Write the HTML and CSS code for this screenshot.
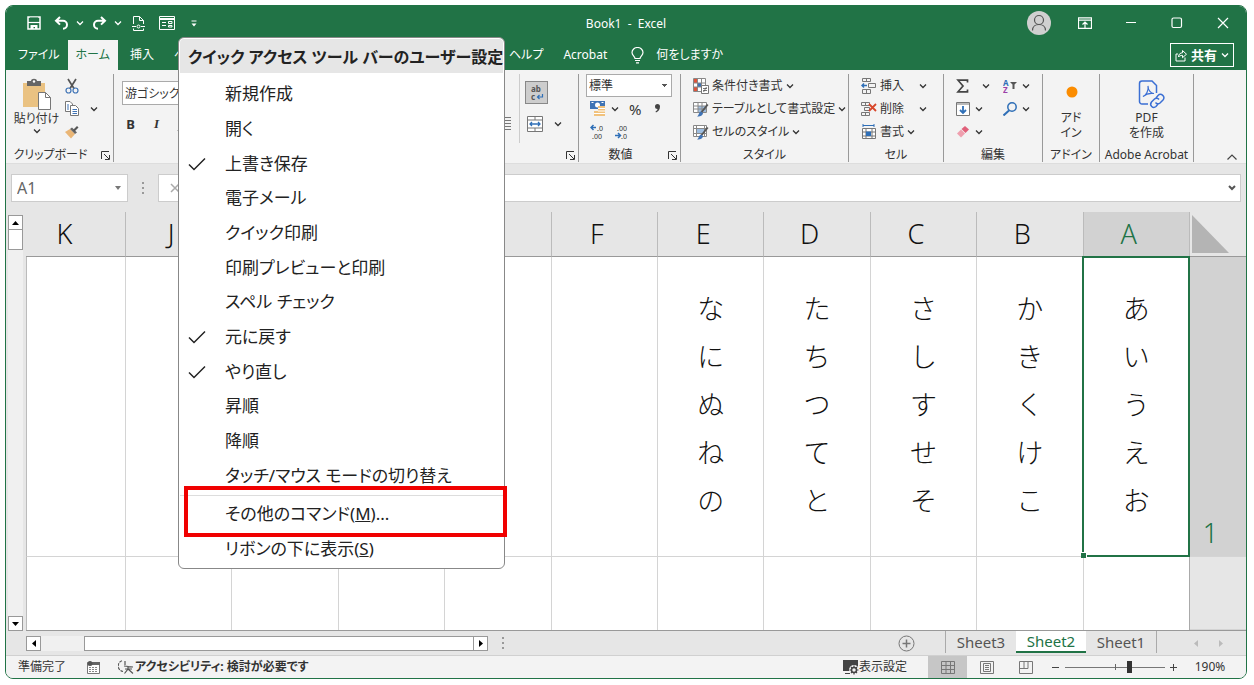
FILE: index.html
```html
<!DOCTYPE html>
<html lang="ja">
<head>
    <meta charset="utf-8">
    <title>Book1 - Excel</title>
    <meta name="viewport" content="width=device-width, initial-scale=1.0">
    <link rel="stylesheet" href="styles.css">
</head>

<body>
    <!-- shared icons -->
    <svg class="defs" width="0" height="0" aria-hidden="true">
        <symbol id="chev" viewBox="0 0 8 8"><path d="M1 2.500 4 5.500l3-3" fill="none" stroke="currentColor" stroke-width="1.300"/></symbol>
        <symbol id="launch" viewBox="0 0 9 9"><path d="M.5 8V.5H8M3 3l5 5M8.500 4v4.500H4" fill="none" stroke="currentColor"/></symbol>
        <symbol id="tick" viewBox="0 0 18 14"><path d="M1 7.500 6 12.500 17 1.500" fill="none" stroke="currentColor" stroke-width="1.500"/></symbol>
    </svg>

    <div class="window">
        <header class="titlebar">
            <div class="qat">
                <button class="qat-btn save" aria-label="上書き保存"><svg width="14" height="14" viewBox="0 0 14 14"><path d="M1 1h12v12H1z" fill="none" stroke="#fff" stroke-width="1.500"/><path d="M3 1.500h8v4.500H3z" fill="#217346"/><path d="M1 6.500h12" stroke="#fff" stroke-width="1.200"/><path d="M3.500 13V9h7v4H8v-2H6.500v2z" fill="#fff"/></svg></button>
                <button class="qat-btn" aria-label="元に戻す"><svg width="15" height="14" viewBox="0 0 15 14"><path d="M6 1 2 4.800 6 8.600M2 4.800h7a4 4 0 0 1 0 8" fill="none" stroke="#fff" stroke-width="2"/></svg></button>
                <button class="drop" aria-label="元に戻す一覧"><svg width="8" height="8"><use href="#chev"/></svg></button>
                <button class="qat-btn" aria-label="やり直し"><svg width="15" height="14" viewBox="0 0 15 14"><path d="m9 1 4 3.800L9 8.600M13 4.800H6a4 4 0 0 0 0 8" fill="none" stroke="#fff" stroke-width="2"/></svg></button>
                <button class="drop" aria-label="やり直し一覧"><svg width="8" height="8"><use href="#chev"/></svg></button>
                <button class="qat-btn wide" aria-label="ページ設定"><svg width="13" height="15" viewBox="0 0 13 15" fill="none" stroke="#fff"><path d="M1.500 8V.5h6l4 4V8M7.500.5v4h4M1.500 12.500v2h10v-2"/><path d="M0 10.500h4m5 0h4"/><circle cx="6.500" cy="10.500" r="1.500"/></svg></button>
                <button class="qat-btn" aria-label="フォーム"><svg width="16" height="14" viewBox="0 0 16 14" fill="none" stroke="#fff"><path d="M.5.5h15v13H.5z"/><path d="M.5 3h15" stroke-width="2"/><path d="M3 6.500h4M3 9.500h4M9.500 5.500H13v2H9.500zM9.500 9.500H13v1.500H9.500z"/></svg></button>
                <button class="qat-btn save" aria-label="クイック アクセス ツール バーのユーザー設定"><svg width="6" height="7" viewBox="0 0 6 7"><path d="M.5 1h5" stroke="#fff"/><path d="M.5 3.500h5L3 6.500z" fill="#fff"/></svg></button>
            </div>
            <div class="doc-title">Book1&nbsp; -&nbsp; Excel</div>
            <div class="win-btns">
                <button aria-label="アカウント"><svg width="24" height="24" viewBox="0 0 24 24"><circle cx="12" cy="12" r="12" fill="#d0d0d0"/><g fill="none" stroke="#555" stroke-width="1.200"><circle cx="12" cy="9" r="4.500"/><path d="M5.500 19.500c0-8 13-8 13 0"/></g></svg></button>
                <button aria-label="リボンの表示オプション"><svg width="14" height="12" viewBox="0 0 14 12" fill="none" stroke="#fff"><path d="M.5.800h13v10.500H.5zM.5 3.200h13M7 11V5M4.500 7.500 7 5l2.500 2.500" stroke-width="1.200"/></svg></button>
                <button aria-label="最小化"><svg width="12" height="12"><path d="M1 5.500h10" stroke="#fff"/></svg></button>
                <button aria-label="最大化"><svg width="12" height="12"><rect x="1" y="1" width="9.500" height="9.500" rx="1.500" fill="none" stroke="#fff" stroke-width="1.200"/></svg></button>
                <button aria-label="閉じる"><svg width="12" height="12"><path d="m1 1 10 10M11 1 1 11" stroke="#fff" stroke-width="1.200"/></svg></button>
            </div>
        </header>

        <nav class="tabs">
            <div class="tabs-main">
                <button class="tab">ファイル</button>
                <button class="tab active">ホーム</button>
                <button class="tab">挿入</button>
                <button class="tab">ページ レイアウト</button>
            </div>
            <button class="tab help">ヘルプ</button>
            <button class="tab">Acrobat</button>
            <button class="tab tell"><svg width="13" height="17" viewBox="0 0 13 17" fill="none" stroke="#fff" stroke-width="1.200"><path d="M4 11.500C4 9.500 1 8.500 1 5.500a5.500 5 0 0 1 11 0c0 3-3 4-3 6z"/><path d="M4 13.500h5M5 15.800h3"/></svg>何をしますか</button>
            <button class="share"><svg width="12" height="13" viewBox="0 0 12 13" fill="none" stroke="#fff"><path d="M3 5H1v7h9V8.500"/><path d="M3.500 8c0-3 2-4.200 4-4.200V1.500l4 3.700-4 3.500V6.400c-2 0-3 .4-4 1.600z"/></svg>共有<svg width="8" height="8"><use href="#chev"/></svg></button>
        </nav>

        <section class="ribbon">
            <div class="group clipboard">
                <div class="group-body">
                    <button class="big">
                        <svg width="28" height="32" viewBox="0 0 28 32"><path d="M0 5h22v24H0z" fill="#eac282"/><path d="M4 3h4c0-3 6-3 6 0h4v5H4z" fill="#666"/><circle cx="11" cy="3.500" r="1.200" fill="#fff"/><path d="M15.500 14.500h7l5 5v12h-12z" fill="#fff" stroke="#777"/><path d="M22.500 14.500v5h5" fill="none" stroke="#777"/></svg>
                        <span>貼り付け</span>
                        <svg width="8" height="8"><use href="#chev"/></svg>
                    </button>
                    <div class="rows">
                        <div class="row"><button aria-label="切り取り"><svg width="14" height="16" viewBox="0 0 14 16" fill="none"><path d="M3 1l6 9.500M11 1 5 10.500" stroke="#555" stroke-width="1.700"/><circle cx="3.500" cy="12.500" r="2.500" stroke="#3f73b5" stroke-width="1.200"/><circle cx="10.500" cy="12.500" r="2.500" stroke="#3f73b5" stroke-width="1.200"/></svg></button></div>
                        <div class="row"><button aria-label="コピー"><svg width="14" height="15" viewBox="0 0 14 15"><path d="M.5.5H5L7.500 3v7.500h-7z" fill="#fff" stroke="#777"/><path d="M5.500 4.500h5l3 3v7h-8z" fill="#fff" stroke="#777"/><path d="M2 4h2M2 6h2M2 8h2M7.500 8.500H12m-4.500 2H12m-4.500 2H12" stroke="#3f73b5"/></svg></button><button class="drop far" aria-label="コピー一覧"><svg width="8" height="8"><use href="#chev"/></svg></button></div>
                        <div class="row"><button aria-label="書式のコピー"><svg width="14" height="14" viewBox="0 0 14 14"><path d="M0 7l5-3 5 5-4 4.500z" fill="#eab676"/><path d="m5 4 2-1.500 5 5L10 9z" fill="#666"/><path d="m8 5 4-4 1.500 1.500-4 4z" fill="#555"/></svg></button></div>
                    </div>
                </div>
                <div class="group-label">クリップボード<button class="launcher" aria-label="クリップボード オプション"><svg width="9" height="9"><use href="#launch"/></svg></button></div>
            </div>

            <div class="group font">
                <div class="group-body">
                    <input class="font-name" type="text" value="游ゴシック" aria-label="フォント">
                    <div class="font-style">
                        <button><b>B</b></button>
                        <button><i>I</i></button>
                        <button><u>U</u></button>
                    </div>
                </div>
            </div>

            <div class="group align">
                <div class="group-body">
                    <svg class="justify" width="14" height="14" viewBox="0 0 14 14" stroke="#777"><path d="M0 .5h14M0 3.500h14M0 6.500h14M0 9.500h14M0 12.500h14"/></svg>
                    <div class="wrap-col">
                        <button class="wrap-btn" aria-label="折り返して全体を表示する"><svg width="20" height="20" viewBox="0 0 20 20"><text x="4" y="9" class="ico-text">ab</text><text x="4" y="17" class="ico-text">c</text><path d="M15.500 11v3h-5m2-2-2 2 2 2" fill="none" stroke="#2f6fb7" stroke-width="1.200"/></svg></button>
                        <div class="merge">
                            <button aria-label="セルを結合して中央揃え"><svg width="16" height="16" viewBox="0 0 16 16" fill="none" stroke="#777"><path d="M.5.5h15v15H.5z" fill="#fff"/><path d="M.5 4h15m-15 8h15M8 .5V4m0 8v3.500"/><path d="M3 8h10M5 6 3 8l2 2m6-4 2 2-2 2" stroke="#2f6fb7" stroke-width="1.300"/></svg></button>
                            <button class="drop far" aria-label="結合一覧"><svg width="8" height="8"><use href="#chev"/></svg></button>
                        </div>
                    </div>
                </div>
                <div class="group-label"><button class="launcher" aria-label="配置オプション"><svg width="9" height="9"><use href="#launch"/></svg></button></div>
            </div>

            <div class="group number">
                <div class="group-body rows">
                    <select class="num-format" aria-label="表示形式"><option>標準</option></select>
                    <div class="row">
                        <button aria-label="通貨表示形式"><svg width="16" height="15" viewBox="0 0 16 15"><path d="M0 0h15v8H0z" fill="#3f73b5"/><circle cx="7.500" cy="4" r="2.500" fill="#fff"/><path d="M1.500 1.500h2m8 0h2" stroke="#fff"/><path d="M8 5h7v10H8zM4 10h5v5H4z" fill="#f1c27d"/><path d="M8 7.500h7M8 10h7M4 12.500h11" stroke="#fff"/></svg></button>
                        <button class="drop near" aria-label="通貨一覧"><svg width="8" height="8"><use href="#chev"/></svg></button>
                        <button class="percent">%</button>
                        <button class="comma" aria-label="桁区切りスタイル"><svg width="6" height="9" viewBox="0 0 6 9"><path d="M0 2.500a2.500 2.500 0 1 1 5 0C5 5.500 3.500 7.500 1 8.500L.500 7.500C2 6.500 2.500 5.800 2.500 5A2.500 2.500 0 0 1 0 2.500z" fill="#444"/></svg></button>
                    </div>
                    <div class="row">
                        <button aria-label="小数点以下の表示桁数を増やす"><svg width="16" height="16" viewBox="0 0 16 16"><path d="M6 3.500H1m2.500-2.500L1 3.500 3.500 6" fill="none" stroke="#2f6fb7" stroke-width="1.500"/><text x="7" y="7" class="ico-num">.0</text><text x="2" y="15" class="ico-num">.00</text></svg></button>
                        <button class="dec" aria-label="小数点以下の表示桁数を減らす"><svg width="16" height="16" viewBox="0 0 16 16"><path d="M0 11.500h5M3 9l2.500 2.500L3 14" fill="none" stroke="#2f6fb7" stroke-width="1.500"/><text x="2" y="7" class="ico-num">.00</text><text x="6" y="15" class="ico-num">.0</text></svg></button>
                    </div>
                </div>
                <div class="group-label">数値<button class="launcher" aria-label="数値オプション"><svg width="9" height="9"><use href="#launch"/></svg></button></div>
            </div>

            <div class="group styles">
                <div class="group-body rows">
                    <button class="row item"><svg width="16" height="16" viewBox="0 0 16 16"><path d="M.5.5h12v13H.5z" fill="#fff" stroke="#888"/><path d="M1 1h4v4H1z" fill="#e0533a"/><path d="M5 5h4v4H5z" fill="#3f73b5"/><path d="M1 9h4v4H1z" fill="#e0533a"/><path d="M4.500.5v13M8.500.5v13M.5 5h12M.5 9h12" stroke="#888" fill="none"/><path d="M8.500 7.500h7v8h-7z" fill="#fff" stroke="#777"/><path d="M10 10.500h4M10 12.500h4M13.500 9l-3 5" stroke="#555" stroke-width=".8"/></svg>条件付き書式<svg width="8" height="8"><use href="#chev"/></svg></button>
                    <button class="row item"><svg width="16" height="16" viewBox="0 0 16 16"><path d="M.5 1.500h13v10H.5z" fill="#fff" stroke="#888"/><path d="M5 5h8v6H5z" fill="#9dbde0"/><path d="M5 1.500v10M9 1.500v10M.5 5h13M.5 8h13" stroke="#888" fill="none"/><path d="M15.500 4 9 12l-1.500-1L14 3z" fill="#555"/><path d="M8 10.500 10 12c0 3-4 3.500-6 3.500 2-1 1.500-4 4-5z" fill="#3f73b5"/></svg>テーブルとして書式設定<svg width="8" height="8"><use href="#chev"/></svg></button>
                    <button class="row item"><svg width="16" height="16" viewBox="0 0 16 16"><path d="M.5 1.500h13v11H.5z" fill="#fff" stroke="#888"/><path d="M3.500 4.500h8v5h-8z" fill="#9dbde0"/><path d="M3.500 1.500v11m8-11v11M.5 4.500h13M.5 9.500h13" stroke="#888" fill="none"/><path d="M15.500 4 9 12l-1.500-1L14 3z" fill="#555"/><path d="M8 10.500 10 12c0 3-4 3.500-6 3.500 2-1 1.500-4 4-5z" fill="#3f73b5"/></svg>セルのスタイル<svg width="8" height="8"><use href="#chev"/></svg></button>
                </div>
                <div class="group-label">スタイル</div>
            </div>

            <div class="group cells">
                <div class="group-body rows">
                    <div class="row"><button class="item"><svg width="16" height="16" viewBox="0 0 16 16" fill="none" stroke="#777"><path d="M1.500.5h8v3h-8zM5.500.5v3M7.500 5.500h7v4h-7zM1.500 11.500h8v4h-8zM5.500 11.500v4"/><path d="M6 7.500H1M3 5.500 1 7.500l2 2" stroke="#2f6fb7" stroke-width="1.500"/></svg>挿入</button><button class="drop push" aria-label="挿入一覧"><svg width="8" height="8"><use href="#chev"/></svg></button></div>
                    <div class="row"><button class="item"><svg width="16" height="16" viewBox="0 0 16 16" fill="none" stroke="#777"><path d="M.5 1.500h8v3h-8zM4.500 1.500v3M3.500 6.500h5v3h-5zM.5 11.500h8v3h-8zM4.500 11.500v3"/><path d="m8 3 7 7m0-7-7 7" stroke="#d8472b" stroke-width="1.800"/></svg>削除</button><button class="drop push" aria-label="削除一覧"><svg width="8" height="8"><use href="#chev"/></svg></button></div>
                    <div class="row"><button class="item"><svg width="16" height="16" viewBox="0 0 16 16" fill="none" stroke="#777"><path d="M1.500 4.500h13v10h-13z" fill="#fff"/><path d="M5 4.500v10m6-10v10M1.500 8h13m-13 4h13"/><path d="M5 7.500h5V12H5z" fill="#2f6fb7" stroke="none"/><path d="M2 1.500h11M2 0v3m11-3v3" stroke="#2f6fb7"/></svg>書式<svg width="8" height="8"><use href="#chev"/></svg></button></div>
                </div>
                <div class="group-label">セル</div>
            </div>

            <div class="group edit">
                <div class="group-body edit-cols">
                    <div class="rows">
                        <div class="row"><button aria-label="オート SUM"><svg width="14" height="14" viewBox="0 0 14 14"><path d="M11.500 3.500V1.200H2L7 7l-5 5.800h9.500v-2.300" fill="none" stroke="#444" stroke-width="1.700"/></svg></button><button class="drop mid" aria-label="合計一覧"><svg width="8" height="8"><use href="#chev"/></svg></button></div>
                        <div class="row"><button aria-label="フィル"><svg width="14" height="14" viewBox="0 0 14 14"><path d="M.5.5h13v13H.5z" fill="#fff" stroke="#777"/><path d="M.5 2h13" stroke="#777"/><path d="M7 4v7M4 8l3 3 3-3" fill="none" stroke="#2f6fb7" stroke-width="1.800"/></svg></button><button class="drop near" aria-label="フィル一覧"><svg width="8" height="8"><use href="#chev"/></svg></button></div>
                        <div class="row"><button aria-label="クリア"><svg width="14" height="14" viewBox="0 0 14 14"><path d="m9 1 4 3.500L9.500 8l-4-4z" fill="#e0607a"/><path d="M5 4.500 9 8.500l-4 4-4-4z" fill="#ef9fae"/></svg></button><button class="drop near" aria-label="クリア一覧"><svg width="8" height="8"><use href="#chev"/></svg></button></div>
                    </div>
                    <div class="rows">
                        <div class="row"><button aria-label="並べ替えとフィルター"><svg width="14" height="16" viewBox="0 0 14 16"><text x="0" y="8" class="ico-a">A</text><text x="0" y="15" class="ico-z">Z</text><path d="M7 4h7l-2.500 2.500V11h-2V6.500z" fill="#555"/></svg></button><button class="drop near" aria-label="並べ替え一覧"><svg width="8" height="8"><use href="#chev"/></svg></button></div>
                        <div class="row"><button aria-label="検索と選択"><svg width="14" height="14" viewBox="0 0 14 14" fill="none" stroke="#2f6fb7"><circle cx="9" cy="5" r="4.200" stroke-width="1.500"/><path d="M6 8.500.5 13.500" stroke-width="2"/></svg></button><button class="drop near" aria-label="検索一覧"><svg width="8" height="8"><use href="#chev"/></svg></button></div>
                    </div>
                </div>
                <div class="group-label">編集</div>
            </div>

            <div class="group addin">
                <div class="group-body"><button class="big"><svg width="32" height="32" viewBox="0 0 32 32"><circle cx="17" cy="14" r="5.500" fill="#fb8c00"/></svg><span>アド<br>イン</span></button></div>
                <div class="group-label">アドイン</div>
            </div>

            <div class="group acrobat">
                <div class="group-body"><button class="big"><svg width="36" height="32" viewBox="0 0 36 32" fill="none" stroke="#3b6fd4" stroke-width="1.500"><path d="M19 26h-6a2.500 2.500 0 0 1-2.500-2.500v-18A2.500 2.500 0 0 1 13 3h10l4.500 4.500V15"/><path d="M14 18.500c3-1 6-6 5-10.500 0 4.500 3 7.500 6 7.500-3-.5-8 .5-11 3z" stroke-width="1.200"/><path d="m27 20 2-2.500c3-3 8 1 5 4.500l-3 3c-1.500 1.300-3.500.8-4.500-.5"/><path d="m29 26-2 2.500c-3 2.500-7-1-4.500-4.500l3-3c1.500-1.300 3.500-.8 4.500.5"/></svg><span>PDF<br>を作成</span></button></div>
                <div class="group-label">Adobe Acrobat</div>
            </div>
            <button class="collapse" aria-label="リボンを折りたたむ"><svg width="10" height="6"><path d="m.5 5.500 4.500-4.500 4.500 4.500" fill="none" stroke="#444" stroke-width="1.200"/></svg></button>
        </section>

        <section class="formula-bar">
            <div class="name-box"><input type="text" value="A1" aria-label="名前ボックス"><button aria-label="名前一覧"><svg width="6" height="4"><path d="M0 0h6L3 4z" fill="#777"/></svg></button></div>
            <div class="dots"></div>
            <div class="fx"><button aria-label="キャンセル"><svg width="10" height="10"><path d="m1 1 8 8M9 1 1 9" stroke="#aaa" stroke-width="1.500"/></svg></button></div>
            <div class="formula"><input type="text" aria-label="数式"><button aria-label="数式バーの展開"><svg width="8" height="6"><path d="m1 1 3 3 3-3" fill="none" stroke="#555" stroke-width="2"/></svg></button></div>
        </section>

        <main class="sheet">
            <div class="vscroll">
                <button class="sb" aria-label="上へ"><svg width="7" height="4"><path d="M0 4h7L3.500 0z"/></svg></button>
                <div class="vthumb"></div>
                <button class="sb bottom" aria-label="下へ"><svg width="7" height="4"><path d="M0 0h7L3.500 4z"/></svg></button>
            </div>
            <div class="grid-wrap">
                <table class="grid">
                    <colgroup><col class="col-k"><col span="10"><col class="col-head"></colgroup>
                    <thead>
                        <tr><th>K</th><th>J</th><th></th><th></th><th></th><th>F</th><th>E</th><th>D</th><th>C</th><th>B</th><th class="sel">A</th><th class="corner"><svg width="37" height="38"><path d="M0 0v38h37z" fill="#b4b4b4"/></svg></th></tr>
                    </thead>
                    <tbody>
                        <tr class="first">
                            <td></td><td></td><td></td><td></td><td></td><td></td>
                            <td>な<br>に<br>ぬ<br>ね<br>の</td>
                            <td>た<br>ち<br>つ<br>て<br>と</td>
                            <td>さ<br>し<br>す<br>せ<br>そ</td>
                            <td>か<br>き<br>く<br>け<br>こ</td>
                            <td class="cursor">あ<br>い<br>う<br>え<br>お</td>
                            <th class="sel">1</th>
                        </tr>
                        <tr><td></td><td></td><td></td><td></td><td></td><td></td><td></td><td></td><td></td><td></td><td></td><th></th></tr>
                    </tbody>
                </table>
            </div>
        </main>

        <div class="sheet-bar">
            <div class="hscroll">
                <button class="sb" aria-label="左へ"><svg width="4" height="7"><path d="M4 0v7L0 3.500z"/></svg></button>
                <div class="hthumb"></div>
                <button class="sb" aria-label="右へ"><svg width="4" height="7"><path d="M0 0v7l4-3.500z"/></svg></button>
            </div>
            <div class="dots"></div>
            <button class="add" aria-label="新しいシート"><svg width="17" height="17" viewBox="0 0 17 17" fill="none" stroke="#777"><circle cx="8.500" cy="8.500" r="7.500"/><path d="M4.500 8.500h8m-4-4v8" stroke-width="1.500"/></svg></button>
            <div class="sheet-tabs">
                <button>Sheet3</button>
                <button class="current">Sheet2</button>
                <button>Sheet1</button>
            </div>
            <div class="sheet-nav"><svg width="4" height="7"><path d="M4 0v7L0 3.500z" fill="#bbb"/></svg><svg width="4" height="7"><path d="M0 0v7l4-3.500z" fill="#bbb"/></svg></div>
        </div>

        <footer class="status">
            <span>準備完了</span>
            <svg class="macro" width="13" height="13" viewBox="0 0 13 13"><path d="M.5 1.500h12v11H.5z" fill="#fff" stroke="#777"/><path d="M5 1h8v3H5z" fill="#666"/><circle cx="3" cy="2.500" r="2.500" fill="#555"/><path d="M2 6.500h9M2 8.500h9M2 10.500h9" stroke="#888" stroke-dasharray="2 1"/></svg>
            <button class="a11y"><svg width="16" height="14" viewBox="0 0 16 14" fill="none" stroke="#555" stroke-width="1.200"><path d="M4 .8A5.500 5.500 0 0 0 5 11.500" stroke-dasharray="3 1"/><path d="M7 1v4m-1 1 9 1M10 6v3l-3.500 4.500M10 9l5 4.500M7 9h7"/></svg>アクセシビリティ: 検討が必要です</button>
            <button class="display"><svg width="16" height="15" viewBox="0 0 16 15"><path d="M0 0h15v8H8v3H0z" fill="#444"/><path d="M2 13.500h5" stroke="#444"/><circle cx="11" cy="10" r="5" fill="#f3f3f3"/><circle cx="11" cy="10" r="2.500" fill="none" stroke="#444" stroke-width="1.500"/><path d="M11 5.500v2m0 5v2M6.500 10h2m5 0h2M8 7l1 1m4 4 1 1m0-6-1 1m-4 4-1 1" stroke="#444" stroke-width="1.200"/></svg>表示設定</button>
            <div class="views">
                <button class="on" aria-label="標準"><svg width="14" height="13"><path d="M.5.5h13v12H.5zM5 .5v12M9.500.5v12M.5 4.500h13M.5 8.500h13" fill="none" stroke="#777"/></svg></button>
                <button aria-label="ページ レイアウト"><svg width="14" height="13"><path d="M.5.5h13v12H.5zM3.500 2.500h7v8h-7zM5 4.500h4M5 6.500h4M5 8.500h4" fill="none" stroke="#777"/></svg></button>
                <button aria-label="改ページ プレビュー"><svg width="14" height="13"><path d="M.5.5h13v12H.5zM1 7.500h8V.5M5 .5v7" fill="none" stroke="#777"/></svg></button>
            </div>
            <button class="zoom-btn" aria-label="縮小"><svg width="9" height="9"><path d="M1 4.500h7" stroke="#444"/></svg></button>
            <input class="zoom" type="range" min="0" max="100" value="65" aria-label="ズーム">
            <button class="zoom-btn" aria-label="拡大"><svg width="9" height="9"><path d="M1 4.500h7m-3.500-3.500v7" stroke="#444"/></svg></button>
            <button class="percent-label">190%</button>
        </footer>

        <div class="menu">
            <div class="menu-title">クイック アクセス ツール バーのユーザー設定</div>
            <div class="menu-list">
                <button>新規作成</button>
                <button>開く</button>
                <button><svg width="18" height="14"><use href="#tick"/></svg>上書き保存</button>
                <button>電子メール</button>
                <button>クイック印刷</button>
                <button>印刷プレビューと印刷</button>
                <button>スペル チェック</button>
                <button><svg width="18" height="14"><use href="#tick"/></svg>元に戻す</button>
                <button><svg width="18" height="14"><use href="#tick"/></svg>やり直し</button>
                <button>昇順</button>
                <button>降順</button>
                <button>タッチ/マウス モードの切り替え</button>
            </div>
            <div class="menu-more">
                <button class="marked">その他のコマンド(<u>M</u>)...</button>
                <button>リボンの下に表示(<u>S</u>)</button>
            </div>
        </div>
    </div>
</body>
</html>
```
FILE: styles.css
```css
* {
    box-sizing: border-box;
}

body {
    margin: 0;
    padding: 5px 7px 6px 5px;
    height: 100vh;
    background-color: white;
    font-family: "Noto Sans", "Noto Sans CJK JP", sans-serif;
    font-feature-settings: "palt";
    font-size: 12px;
    line-height: 16px;
    color: #333;
}

button, input, select {
    font: inherit;
    font-feature-settings: inherit;
    color: inherit;
    border: none;
    background: none;
    padding: 0;
    margin: 0;
    border-radius: 0;
    outline: none;
}

button {
    display: flex;
    align-items: center;
    justify-content: center;
    white-space: nowrap;
}

svg {
    display: block;
    flex-shrink: 0;
}

.defs {
    position: absolute;
}

.window {
    position: relative;
    display: flex;
    flex-direction: column;
    height: 100%;
    border: 1px solid #217346;
    border-radius: 8px;
    background-color: #e6e6e6;
}

/* title bar */
.titlebar {
    display: grid;
    grid-template-columns: 1fr auto 1fr;
    align-items: center;
    height: 34px;
    background-color: #217346;
    border-radius: 7px 7px 0 0;
    color: white;
}

.doc-title {
    padding-top: 2px;
}

.qat {
    display: flex;
    align-items: center;
    padding-left: 15px;
}

.qat-btn {
    width: 28px;
}

.qat-btn.save {
    width: 26px;
}

.qat-btn.wide {
    width: 30px;
}

.drop {
    width: 10px;
}

.win-btns {
    display: flex;
    justify-content: flex-end;
}

.win-btns button {
    width: 46px;
}

/* ribbon tabs */
.tabs {
    display: flex;
    height: 30px;
    background-color: #217346;
    color: white;
}

.tabs-main {
    display: flex;
    width: 491px;
}

.tab {
    padding: 0 8px 0 12px;
}

.tab.active {
    padding: 0 8px;
    background-color: #f3f3f3;
    color: #217346;
}

.tell {
    gap: 12px;
    padding-left: 16px;
}

.share {
    align-self: center;
    gap: 4px;
    height: 24px;
    margin-left: auto;
    margin-right: 12px;
    padding: 0 4px;
    border: 1px solid white;
    font-size: 13px;
    font-weight: bold;
}

/* ribbon */
.ribbon {
    display: flex;
    padding: 4px 0 1px;
    background-color: #f3f3f3;
    border-bottom: 1px solid #ddd;
}

.group {
    border-right: 1px solid #999;
}

.group-body {
    display: flex;
    height: 69px;
}

.group-label {
    position: relative;
    height: 19px;
    padding-top: 4px;
    line-height: 15px;
    text-align: center;
    white-space: nowrap;
}

.launcher {
    position: absolute;
    right: 3px;
    bottom: 2px;
}

.rows, .group-body.rows {
    display: flex;
    flex-direction: column;
}

.row {
    display: flex;
    align-items: center;
    justify-content: flex-start;
    height: 23px;
}

.item {
    gap: 3px;
}

.far {
    margin-left: 10px;
}

.mid {
    margin-left: 11px;
}

.near {
    margin-left: 4px;
}

.push {
    margin-left: auto;
}

.big {
    flex-direction: column;
    justify-content: flex-start;
    padding-top: 4px;
    line-height: 15px;
}

.clipboard {
    width: 108px;
}

.clipboard .big {
    width: 57px;
    line-height: 17px;
    margin-left: 2px;
}

.clipboard .group-label {
    padding-right: 18px;
}

.font {
    width: 150px;
}

.font .group-body {
    flex-direction: column;
    padding: 7px 8px 0;
}

.font-name {
    width: 100%;
    height: 24px;
    padding: 0 2px;
    border: 1px solid #aaa;
    background-color: white;
}

.font-style {
    display: flex;
    gap: 9px;
    padding-top: 11px;
    font-size: 13px;
}

.font-style button {
    width: 17px;
}

.font-style b, .font-style i {
    font-family: "Liberation Serif", serif;
    font-weight: bold;
}

.font-style b {
    font-family: "Noto Sans", sans-serif;
}

.align {
    flex: 1;
}

.align .group-body {
    justify-content: flex-end;
    padding-right: 15px;
}

.justify {
    align-self: flex-end;
    margin-right: 8px;
    margin-bottom: 12px;
}

.wrap-col {
    padding: 7px 0 0 5px;
    border-left: 1px solid #ccc;
}

.wrap-btn {
    width: 23px;
    height: 23px;
    border: 1px solid #888;
    background-color: #cdcdcd;
}

.merge {
    display: flex;
    padding: 12px 0 0 2px;
}

.ico-text {
    font: bold 8px "Noto Sans", sans-serif;
    fill: #555;
}

.ico-num {
    font: 7px "Noto Sans", sans-serif;
    fill: #333;
}

.ico-a, .ico-z {
    font: bold 8px "Noto Sans", sans-serif;
    fill: #2f6fb7;
}

.ico-z {
    fill: #9b3fa8;
}

.number {
    width: 102px;
}

.number .group-body {
    padding: 0 8px 0 7px;
}

.number .row {
    padding-left: 4px;
}

.number .group-label {
    padding-right: 18px;
}

.num-format {
    appearance: none;
    height: 23px;
    padding: 0 2px;
    border: 1px solid #aaa;
    background: conic-gradient(from -45deg at 50% 100%, #555 90deg, transparent 0) calc(100% - 4px) 50% / 6px 3px no-repeat white;
}

.percent {
    margin-left: 9px;
    font-size: 15px;
}

.comma {
    margin-left: 14px;
}

.dec {
    margin-left: 9px;
}

.styles {
    width: 168px;
}

.styles .group-body {
    padding-left: 12px;
}

.cells {
    width: 95px;
}

.cells .group-body {
    padding: 0 15px 0 12px;
}

.edit {
    width: 99px;
}

.edit-cols {
    gap: 12px;
    padding-left: 12px;
}

.addin {
    width: 57px;
}

.addin .big, .acrobat .big {
    width: 100%;
}

.acrobat {
    width: 94px;
}

.collapse {
    align-self: flex-end;
    width: 52px;
    height: 10px;
    padding-left: 24px;
}

/* formula bar */
.formula-bar {
    display: flex;
    height: 48px;
    padding: 10px 5px 10px;
}

.name-box, .fx, .formula {
    display: flex;
    align-items: center;
    background-color: white;
    border: 1px solid #ccc;
}

.name-box {
    width: 117px;
    padding: 0 6px 0 5px;
    font-size: 16px;
    color: #666;
}

.name-box input, .formula input {
    flex: 1;
    min-width: 0;
}

.dots {
    align-self: center;
    width: 2px;
    height: 12px;
    margin: 0 14px;
    background: repeating-linear-gradient(#999 0 2px, transparent 2px 5px);
}

.fx {
    width: 100px;
    padding-left: 11px;
}

.formula {
    flex: 1;
    margin-left: 6px;
    padding-right: 4px;
}

/* sheet */
.sheet {
    flex: 1;
    display: flex;
    min-height: 0;
}

.vscroll {
    display: flex;
    flex-direction: column;
    width: 15px;
    margin: 3px 3px 0 2px;
    background-color: #f0f0f0;
}

.sb {
    width: 15px;
    height: 15px;
    border: 1px solid #999;
    background-color: white;
}

.vthumb {
    height: 20px;
    border: 1px solid #999;
    border-top: none;
    background-color: white;
}

.sb.bottom {
    margin-top: auto;
}

.grid-wrap {
    flex: 1;
}

.grid {
    width: 100%;
    height: 100%;
    table-layout: fixed;
    border-collapse: separate;
    border-spacing: 0;
    border-bottom: 1px solid #999;
}

.col-k {
    width: 100px;
}

.col-head {
    width: 56px;
}

.grid th, .grid td {
    padding: 0;
    border-right: 1px solid #d4d4d4;
    border-bottom: 1px solid #d4d4d4;
}

.grid th {
    padding-right: 15px;
    font-size: 27px;
    line-height: 30px;
    font-weight: 300;
    color: #111;
}

.grid th:first-child {
    padding-right: 22px;
}

.grid thead th {
    height: 45px;
    border-right-color: #bbb;
    border-bottom-color: #999;
}

.grid .sel {
    background-color: #d2d2d2;
    color: #217346;
}

.grid thead .corner {
    padding: 0 0 0 2px;
    border-right: none;
}

.grid tbody th {
    border-right: none;
    vertical-align: bottom;
    padding-bottom: 8px;
}

.grid td {
    padding-bottom: 6px;
    background-color: white;
    text-align: center;
    font-family: "Noto Sans CJK JP", sans-serif;
    font-feature-settings: normal;
    font-size: 27px;
    font-weight: 300;
    line-height: 48px;
    color: #111;
}

.grid td:first-child {
    border-left: 1px solid #bbb;
}

.grid td:nth-child(11) {
    border-right-color: #aaa;
}

.grid tr:last-child td {
    border-bottom: none;
}

.first td {
    height: 300px;
}

.grid .cursor {
    position: relative;
}

.cursor::before {
    content: "";
    position: absolute;
    inset: -1px -1px -1px -2px;
    border: 2px solid #217346;
}

.cursor::after {
    content: "";
    position: absolute;
    left: -3px;
    bottom: -2px;
    width: 5px;
    height: 5px;
    background-color: #217346;
    border-top: 1px solid white;
    border-right: 1px solid white;
}

/* sheet tabs */
.sheet-bar {
    display: flex;
    height: 25px;
    border-bottom: 1px solid #d0d0d0;
}

.hscroll {
    display: flex;
    align-self: center;
    width: 462px;
    margin-left: 20px;
    background-color: #f0f0f0;
}

.hthumb {
    flex: 1;
    margin-left: 43px;
    border: 1px solid #999;
    border-right: none;
    background-color: white;
}

.add {
    margin-left: auto;
    margin-right: 30px;
}

.sheet-tabs {
    display: flex;
    height: 22px;
    border: 1px solid #aaa;
    border-width: 0 1px;
    font-size: 15px;
    color: #555;
}

.sheet-tabs button {
    width: 70px;
}

.sheet-tabs .current {
    background-color: white;
    border-bottom: 2px solid #217346;
    color: #217346;
}

.sheet-nav {
    display: flex;
    align-items: center;
    justify-content: space-between;
    width: 66px;
    margin-right: 23px;
    padding-left: 37px;
}

/* status bar */
.status {
    display: flex;
    align-items: center;
    height: 22px;
    padding: 0 19px 0 12px;
    background-color: #f3f3f3;
    border-radius: 0 0 7px 7px;
}

.macro {
    margin: 0 18px 0 21px;
}

.a11y {
    gap: 1px;
    font-weight: bold;
}

.display {
    margin-left: auto;
    margin-right: 21px;
}

.views {
    display: flex;
    align-self: stretch;
}

.views button {
    width: 39px;
}

.views .on {
    background-color: #c6c6c6;
}

.zoom-btn {
    width: 9px;
    margin-left: 6px;
}

.zoom {
    appearance: none;
    width: 100px;
    height: 12px;
    margin-left: 5px;
    background: linear-gradient(#666, #666) 50% 50% / 1px 6px no-repeat,
        linear-gradient(#777, #777) 50% 50% / 100% 1px no-repeat;
}

.zoom::-webkit-slider-thumb {
    appearance: none;
    width: 5px;
    height: 12px;
    background-color: #333;
}

.zoom + .zoom-btn {
    margin-left: 4px;
}

.percent-label {
    width: 34px;
    margin-left: 15px;
}

/* quick access menu */
.menu {
    position: absolute;
    left: 172px;
    top: 31px;
    width: 327px;
    padding: 1px 1px 2px;
    border: 1px solid #888;
    border-radius: 6px;
    background-color: white;
    font-size: 17px;
    line-height: 24px;
    color: #222;
}

.menu-title {
    height: 34px;
    padding: 6px 0 0 8px;
    background-color: #e6e6e6;
    border-radius: 4px 4px 0 0;
    font-size: 16px;
    font-weight: bold;
    white-space: nowrap;
}

.menu-list {
    display: flex;
    flex-direction: column;
    height: 416px;
    margin: 4px 0 2px;
}

.menu-list button {
    flex: 1;
}

.menu button {
    position: relative;
    justify-content: flex-start;
    width: 100%;
    padding-left: 45px;
    white-space: pre;
}

.menu button svg {
    position: absolute;
    left: 8px;
}

.menu-more {
    border-top: 1px solid #ddd;
}

.menu-more button {
    height: 35px;
}

/* red frame round the item */
.marked::after {
    content: "";
    position: absolute;
    inset: -10px -4px -6px 4px;
    border: 4px solid #f00000;
}
```
